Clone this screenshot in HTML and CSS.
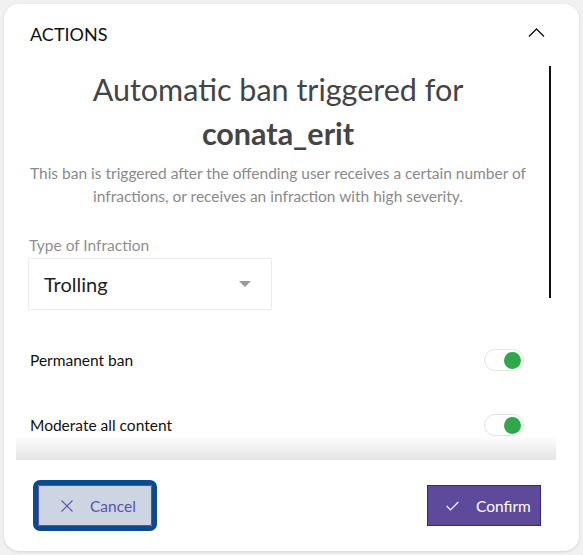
FILE: index.html
```html
<!DOCTYPE html>
<html>
  <head>
    <title>Actions</title>
    <link rel="stylesheet" href="styles.css">
  </head>
  <body>
    <div class="card">
      <div class="card-head">
        <span class="card-title">ACTIONS</span>
        <svg class="chevron" width="17" height="9" viewBox="0 0 17 9">
          <path d="M1 8.5 L8.5 1 L16 8.5" fill="none" stroke="#111" stroke-width="1.3"/>
        </svg>
      </div>

      <div class="scroll-area">
        <div class="scroll-content">
          <h2 class="ban-title">Automatic ban triggered for<br><strong>conata_erit</strong></h2>
          <p class="ban-desc">This ban is triggered after the offending user receives a certain number of infractions, or receives an infraction with high severity.</p>

          <label class="field-label">Type of Infraction</label>
          <div class="select">
            <span>Trolling</span>
            <span class="caret"></span>
          </div>

          <div class="toggle-row">
            <span>Permanent ban</span>
            <span class="toggle"><span class="knob"></span></span>
          </div>
          <div class="toggle-row">
            <span>Moderate all content</span>
            <span class="toggle"><span class="knob"></span></span>
          </div>
        </div>
        <div class="scroll-thumb"></div>
        <div class="fade"></div>
      </div>

      <div class="card-foot">
        <button class="btn btn-cancel">
          <svg width="12" height="12" viewBox="0 0 12 12">
            <path d="M0.5 0.5 L11.5 11.5 M11.5 0.5 L0.5 11.5" stroke="#5a52a8" stroke-width="1.1"/>
          </svg>
          Cancel
        </button>
        <button class="btn btn-confirm">
          <svg width="13" height="10" viewBox="0 0 13 10">
            <path d="M0.7 5 L4.5 8.8 L12.3 1" fill="none" stroke="#fff" stroke-width="1.2"/>
          </svg>
          Confirm
        </button>
      </div>
    </div>
  </body>
</html>
```

FILE: styles.css
```css
body {
  margin: 0;
  padding: 4px;
  background-color: #f1f1f1;
  font-family: Lato, "Open Sans", sans-serif;
}

.card {
  width: 575px;
  height: 547px;
  background-color: #fff;
  border-radius: 15px;
  box-shadow: 0 1px 3px rgba(0, 0, 0, 0.12);
  display: flex;
  flex-direction: column;
}

.card-head {
  display: flex;
  justify-content: space-between;
  align-items: center;
  padding: 17px 34px 0 26px;
  height: 26px;
}

.card-title {
  font-size: 18px;
  color: #111;
}

.chevron {
  margin-top: -3px;
}

.scroll-area {
  position: relative;
  margin: 0 23px 0 12px;
  height: 413px;
  overflow: hidden;
}

.scroll-content {
  padding: 20px 28px 0 12px;
}

.ban-title {
  margin: 0;
  text-align: center;
  font-size: 30.5px;
  font-weight: normal;
  line-height: 44px;
  color: #444;
}

.ban-title strong {
  font-weight: bold;
}

.ban-desc {
  margin: 7px 0 0;
  text-align: center;
  font-size: 15.5px;
  line-height: 23px;
  color: #8a8a8a;
}

.field-label {
  display: block;
  margin-top: 28px;
  padding-left: 1px;
  font-size: 15.5px;
  color: #909090;
}

.select {
  display: flex;
  justify-content: space-between;
  align-items: center;
  width: 244px;
  height: 52px;
  margin-top: 4px;
  padding: 0 20px 0 15px;
  box-sizing: border-box;
  border: 1px solid #ececec;
  font-size: 20px;
  color: #222;
}

.caret {
  width: 0;
  height: 0;
  border-left: 6px solid transparent;
  border-right: 6px solid transparent;
  border-top: 6px solid #999;
}

.toggle-row {
  display: flex;
  justify-content: space-between;
  align-items: center;
  height: 22px;
  margin-top: 39px;
  padding-left: 2px;
  padding-right: 4px;
  font-size: 15.5px;
  color: #111;
}

.toggle-row + .toggle-row {
  margin-top: 43px;
}

.toggle {
  display: flex;
  justify-content: flex-end;
  align-items: center;
  width: 40px;
  height: 22px;
  padding: 0 2px;
  box-sizing: border-box;
  border: 1px solid #e3e3e3;
  border-radius: 11px;
}

.knob {
  width: 17px;
  height: 17px;
  border-radius: 50%;
  background-color: #2ea84a;
}

.scroll-thumb {
  position: absolute;
  top: 19px;
  right: 5px;
  width: 2px;
  height: 232px;
  background-color: #111;
}

.fade {
  position: absolute;
  left: 0;
  right: 0;
  bottom: 0;
  height: 25px;
  background: linear-gradient(to bottom, rgba(255, 255, 255, 0), #e4e4e4);
}

.card-foot {
  display: flex;
  justify-content: space-between;
  align-items: center;
  padding: 25px 38px 0 29px;
}

.btn {
  display: flex;
  align-items: center;
  gap: 17px;
  width: 114px;
  height: 41px;
  padding: 0 0 0 18px;
  box-sizing: border-box;
  font-family: inherit;
  font-size: 15.5px;
}

.btn-cancel {
  margin-left: 5px;
  background-color: #ccd5e1;
  border: 1px solid #5a52a8;
  color: #5a52a8;
  outline: 5px solid #0b4a8c;
  border-radius: 2px;
  outline-offset: 0;
  padding-left: 22px;
}

.btn-confirm {
  background-color: #5e4a9b;
  border: 1px solid #2a2a80;
  color: #fff;
}
```
